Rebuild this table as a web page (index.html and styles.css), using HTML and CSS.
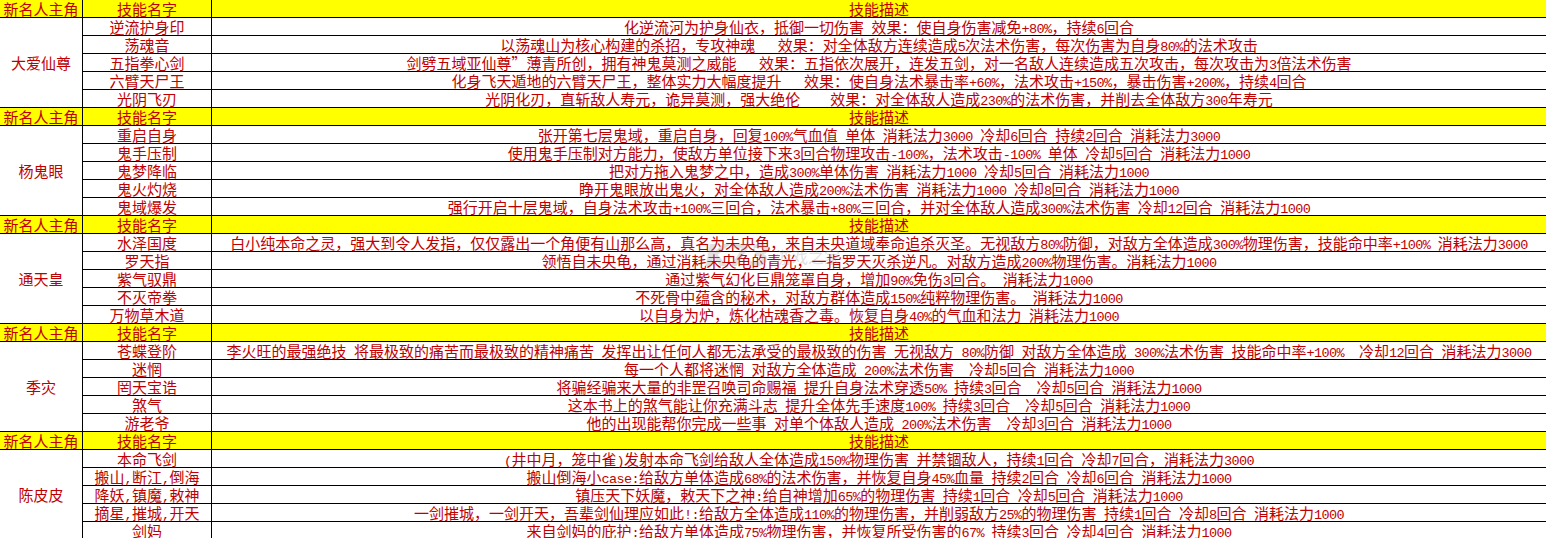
FILE: index.html
```html
<!DOCTYPE html>
<html lang="zh-CN">
<head>
<meta charset="utf-8">
<title>新名人主角技能表</title>
<link rel="stylesheet" href="styles.css">
</head>
<body>
<div class="page">
<table class="sheet">
<colgroup><col class="c1"><col class="c2"><col class="c3"></colgroup>
<tbody>
<tr class="hd"><td>新名人主角</td><td>技能名字</td><td class="desc"><div class="t">技能描述</div></td></tr>
<tr><td rowspan="5" class="hero">大爱仙尊</td><td>逆流护身印</td><td class="desc"><div class="t">化逆流河为护身仙衣，抵御一切伤害&ensp;效果：使自身伤害减免<span class="n">+80%</span>，持续<span class="n">6</span>回合</div></td></tr>
<tr><td>荡魂音</td><td class="desc"><div class="t">以荡魂山为核心构建的杀招，专攻神魂　&ensp;效果：对全体敌方连续造成<span class="n">5</span>次法术伤害，每次伤害为自身<span class="n">80%</span>的法术攻击</div></td></tr>
<tr><td>五指拳心剑</td><td class="desc"><div class="t">剑劈五域亚仙尊”薄青所创，拥有神鬼莫测之威能　&ensp;效果：五指依次展开，连发五剑，对一名敌人连续造成五次攻击，每次攻击为<span class="n">3</span>倍法术伤害</div></td></tr>
<tr><td>六臂天尸王</td><td class="desc"><div class="t">化身飞天遁地的六臂天尸王，整体实力大幅度提升　&ensp;效果：使自身法术暴击率<span class="n">+60%</span>，法术攻击<span class="n">+150%</span>，暴击伤害<span class="n">+200%</span>，持续<span class="n">4</span>回合</div></td></tr>
<tr><td>光阴飞刃</td><td class="desc"><div class="t">光阴化刃，直斩敌人寿元，诡异莫测，强大绝伦　　效果：对全体敌人造成<span class="n">230%</span>的法术伤害，并削去全体敌方<span class="n">300</span>年寿元</div></td></tr>

<tr class="hd"><td>新名人主角</td><td>技能名字</td><td class="desc"><div class="t">技能描述</div></td></tr>
<tr><td rowspan="5" class="hero">杨鬼眼</td><td>重启自身</td><td class="desc"><div class="t">张开第七层鬼域，重启自身，回复<span class="n">100%</span>气血值&ensp;单体&ensp;消耗法力<span class="n">3000</span>&ensp;冷却<span class="n">6</span>回合&ensp;持续<span class="n">2</span>回合&ensp;消耗法力<span class="n">3000</span></div></td></tr>
<tr><td>鬼手压制</td><td class="desc"><div class="t">使用鬼手压制对方能力，使敌方单位接下来<span class="n">3</span>回合物理攻击<span class="n">-100%</span>，法术攻击<span class="n">-100%</span>&ensp;单体&ensp;冷却<span class="n">5</span>回合&ensp;消耗法力<span class="n">1000</span></div></td></tr>
<tr><td>鬼梦降临</td><td class="desc"><div class="t">把对方拖入鬼梦之中，造成<span class="n">300%</span>单体伤害&ensp;消耗法力<span class="n">1000</span>&ensp;冷却<span class="n">5</span>回合&ensp;消耗法力<span class="n">1000</span></div></td></tr>
<tr><td>鬼火灼烧</td><td class="desc"><div class="t">睁开鬼眼放出鬼火，对全体敌人造成<span class="n">200%</span>法术伤害&ensp;消耗法力<span class="n">1000</span>&ensp;冷却<span class="n">8</span>回合&ensp;消耗法力<span class="n">1000</span></div></td></tr>
<tr><td>鬼域爆发</td><td class="desc"><div class="t">强行开启十层鬼域，自身法术攻击<span class="n">+100%</span>三回合，法术暴击<span class="n">+80%</span>三回合，并对全体敌人造成<span class="n">300%</span>法术伤害&ensp;冷却<span class="n">12</span>回合&ensp;消耗法力<span class="n">1000</span></div></td></tr>

<tr class="hd"><td>新名人主角</td><td>技能名字</td><td class="desc"><div class="t">技能描述</div></td></tr>
<tr><td rowspan="5" class="hero">通天皇</td><td>水泽国度</td><td class="desc"><div class="t">白小纯本命之灵，强大到令人发指，仅仅露出一个角便有山那么高，真名为未央龟，来自未央道域奉命追杀灭圣。无视敌方<span class="n">80%</span>防御，对敌方全体造成<span class="n">300%</span>物理伤害，技能命中率<span class="n">+100%</span>&ensp;消耗法力<span class="n">3000</span></div></td></tr>
<tr><td>罗天指</td><td class="desc"><div class="t">领悟自未央龟，通过消耗未央龟的青光，一指罗天灭杀逆凡。对敌方造成<span class="n">200%</span>物理伤害。消耗法力<span class="n">1000</span></div></td></tr>
<tr><td>紫气驭鼎</td><td class="desc"><div class="t">通过紫气幻化巨鼎笼罩自身，增加<span class="n">90%</span>免伤<span class="n">3</span>回合。&ensp;消耗法力<span class="n">1000</span></div></td></tr>
<tr><td>不灭帝拳</td><td class="desc"><div class="t">不死骨中蕴含的秘术，对敌方群体造成<span class="n">150%</span>纯粹物理伤害。&ensp;消耗法力<span class="n">1000</span></div></td></tr>
<tr><td>万物草木道</td><td class="desc"><div class="t">以自身为炉，炼化枯魂香之毒。恢复自身<span class="n">40%</span>的气血和法力&ensp;消耗法力<span class="n">1000</span></div></td></tr>

<tr class="hd"><td>新名人主角</td><td>技能名字</td><td class="desc"><div class="t">技能描述</div></td></tr>
<tr><td rowspan="5" class="hero">季灾</td><td>苍蝶登阶</td><td class="desc"><div class="t">李火旺的最强绝技&ensp;将最极致的痛苦而最极致的精神痛苦&ensp;发挥出让任何人都无法承受的最极致的伤害&ensp;无视敌方&ensp;<span class="n">80%</span>防御&ensp;对敌方全体造成&ensp;<span class="n">300%</span>法术伤害&ensp;技能命中率<span class="n">+100%</span>　冷却<span class="n">12</span>回合&ensp;消耗法力<span class="n">3000</span></div></td></tr>
<tr><td>迷惘</td><td class="desc"><div class="t">每一个人都将迷惘&ensp;对敌方全体造成&ensp;<span class="n">200%</span>法术伤害　冷却<span class="n">5</span>回合&ensp;消耗法力<span class="n">1000</span></div></td></tr>
<tr><td>罔天宝诰</td><td class="desc"><div class="t">将骗经骗来大量的非罡召唤司命赐福&ensp;提升自身法术穿透<span class="n">50%</span>&ensp;持续<span class="n">3</span>回合　冷却<span class="n">5</span>回合&ensp;消耗法力<span class="n">1000</span></div></td></tr>
<tr><td>煞气</td><td class="desc"><div class="t">这本书上的煞气能让你充满斗志&ensp;提升全体先手速度<span class="n">100%</span>&ensp;持续<span class="n">3</span>回合　冷却<span class="n">5</span>回合&ensp;消耗法力<span class="n">1000</span></div></td></tr>
<tr><td>游老爷</td><td class="desc"><div class="t">他的出现能帮你完成一些事&ensp;对单个体敌人造成&ensp;<span class="n">200%</span>法术伤害　冷却<span class="n">3</span>回合&ensp;消耗法力<span class="n">1000</span></div></td></tr>

<tr class="hd"><td>新名人主角</td><td>技能名字</td><td class="desc"><div class="t">技能描述</div></td></tr>
<tr><td rowspan="5" class="hero">陈皮皮</td><td>本命飞剑</td><td class="desc"><div class="t"><span class="n">(</span>井中月，笼中雀<span class="n">)</span>发射本命飞剑给敌人全体造成<span class="n">150%</span>物理伤害&ensp;并禁锢敌人，持续<span class="n">1</span>回合&ensp;冷却<span class="n">7</span>回合，消耗法力<span class="n">3000</span></div></td></tr>
<tr><td>搬山<span class="n">,</span>断江<span class="n">,</span>倒海</td><td class="desc"><div class="t">搬山倒海小<span class="n">case:</span>给敌方单体造成<span class="n">68%</span>的法术伤害，并恢复自身<span class="n">45%</span>血量&ensp;持续<span class="n">2</span>回合&ensp;冷却<span class="n">6</span>回合&ensp;消耗法力<span class="n">1000</span></div></td></tr>
<tr><td>降妖<span class="n">,</span>镇魔<span class="n">,</span>敕神</td><td class="desc"><div class="t">镇压天下妖魔，敕天下之神<span class="n">:</span>给自神增加<span class="n">65%</span>的物理伤害&ensp;持续<span class="n">1</span>回合&ensp;冷却<span class="n">5</span>回合&ensp;消耗法力<span class="n">1000</span></div></td></tr>
<tr><td>摘星<span class="n">,</span>摧城<span class="n">,</span>开天</td><td class="desc"><div class="t">一剑摧城，一剑开天，吾辈剑仙理应如此<span class="n">!:</span>给敌方全体造成<span class="n">110%</span>的物理伤害，并削弱敌方<span class="n">25%</span>的物理伤害&ensp;持续<span class="n">1</span>回合&ensp;冷却<span class="n">8</span>回合&ensp;消耗法力<span class="n">1000</span></div></td></tr>
<tr><td>剑妈</td><td class="desc"><div class="t">来自剑妈的庇护<span class="n">:</span>给敌方单体造成<span class="n">75%</span>物理伤害，并恢复所受伤害的<span class="n">67%</span>&ensp;持续<span class="n">3</span>回合&ensp;冷却<span class="n">4</span>回合&ensp;消耗法力<span class="n">1000</span></div></td></tr>
</tbody>
</table>
<div class="wm"><span class="wm-logo">K73</span><span class="wm-name">游戏之家</span></div>
</div>
</body>
</html>
```

FILE: styles.css
```css
html, body {
  margin: 0;
  padding: 0;
  background: #ffffff;
  overflow: hidden;
}

body {
  width: 1546px;
  height: 538px;
  font-family: "Noto Sans CJK SC", sans-serif;
  font-size: 15px;
  color: #c00000;
}

.page {
  position: relative;
  width: 1546px;
  height: 538px;
  overflow: hidden;
}

.sheet {
  border-collapse: separate;
  border-spacing: 0;
  table-layout: fixed;
  width: 1546px;
}

.c1 { width: 83px; }
.c2 { width: 129px; }
.c3 { width: 1334px; }

.sheet td {
  height: 17px;
  padding: 0;
  border-right: 1px solid #000;
  border-bottom: 1px solid #000;
  line-height: 17px;
  white-space: nowrap;
  text-align: center;
  vertical-align: middle;
  overflow: visible;
}

.sheet td.desc {
  border-right: none;
}

.hd td {
  background: #ffff00;
}

.t {
  height: 17px;
  text-align: center;
}

.n {
  font-family: "Liberation Mono", monospace;
  font-size: 13.5px;
  letter-spacing: -0.6px;
  line-height: 0;
}

.wm {
  position: absolute;
  left: 705px;
  top: 238px;
  display: flex;
  align-items: center;
  gap: 6px;
  opacity: 0.3;
  color: #9a9a9a;
  pointer-events: none;
}

.wm-logo {
  font-family: "DejaVu Sans", sans-serif;
  font-weight: bold;
  font-style: italic;
  font-size: 30px;
  line-height: 36px;
}

.wm-name {
  font-size: 16px;
  line-height: 20px;
}
```
